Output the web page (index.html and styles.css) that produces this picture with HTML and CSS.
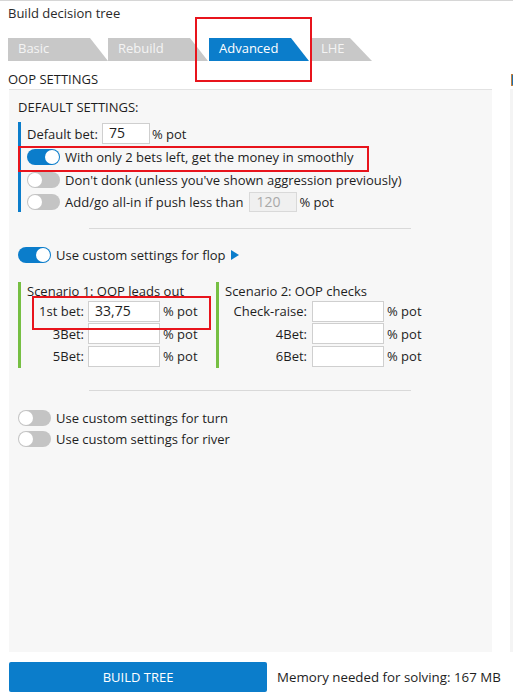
FILE: index.html
```html
<!DOCTYPE html>
<html>
<head>
<meta charset="utf-8">
<link rel="stylesheet" href="styles.css">
</head>
<body>
<div class="title">Build decision tree</div>
<div class="tabs">
  <div class="tab">Basic</div>
  <div class="tab">Rebuild</div>
  <div class="tab active">Advanced</div>
  <div class="tab short">LHE</div>
</div>
<div class="columns">
  <div class="col-main">
    <div class="section-head">OOP SETTINGS</div>
    <div class="panel">
      <div class="sub-head">DEFAULT SETTINGS:</div>
      <div class="defaults">
        <div class="row r1"><span class="lbl">Default bet:</span><span class="input w48">75</span><span class="unit">% pot</span></div>
        <div class="row r2"><span class="toggle on"></span><span class="lbl">With only 2 bets left, get the money in smoothly</span></div>
        <div class="row r3"><span class="toggle"></span><span class="lbl">Don't donk (unless you've shown aggression previously)</span></div>
        <div class="row r4"><span class="toggle"></span><span class="lbl">Add/go all-in if push less than</span><span class="input w48 disabled">120</span><span class="unit">% pot</span></div>
      </div>
      <div class="sep sep1"></div>
      <div class="row flop"><span class="toggle on"></span><span class="lbl">Use custom settings for flop</span><svg class="tri" width="8" height="10" viewBox="0 0 8 10"><polygon points="0,0 8,5 0,10" fill="#0b7dcb"/></svg></div>
      <div class="scenarios">
        <div class="scenario s1">
          <div class="sc-title">Scenario 1: OOP leads out</div>
          <div class="sc-row"><span class="sc-lbl">1st bet:</span><span class="input w72">33,75</span><span class="unit">% pot</span></div>
          <div class="sc-row"><span class="sc-lbl">3Bet:</span><span class="input w72"></span><span class="unit">% pot</span></div>
          <div class="sc-row"><span class="sc-lbl">5Bet:</span><span class="input w72"></span><span class="unit">% pot</span></div>
        </div>
        <div class="scenario s2">
          <div class="sc-title">Scenario 2: OOP checks</div>
          <div class="sc-row"><span class="sc-lbl">Check-raise:</span><span class="input w72"></span><span class="unit">% pot</span></div>
          <div class="sc-row"><span class="sc-lbl">4Bet:</span><span class="input w72"></span><span class="unit">% pot</span></div>
          <div class="sc-row"><span class="sc-lbl">6Bet:</span><span class="input w72"></span><span class="unit">% pot</span></div>
        </div>
      </div>
      <div class="sep sep2"></div>
      <div class="row turn"><span class="toggle"></span><span class="lbl">Use custom settings for turn</span></div>
      <div class="row river"><span class="toggle"></span><span class="lbl">Use custom settings for river</span></div>
    </div>
    <div class="footer">
      <div class="build-btn">BUILD TREE</div>
      <div class="memory">Memory needed for solving: 167 MB</div>
    </div>
  </div>
  <div class="col-side">
    <div class="side-head"><span class="side-icon"></span></div>
    <div class="side-panel"></div>
  </div>
</div>
<div class="mark mark-tab"></div>
<div class="mark mark-toggle"></div>
<div class="mark mark-bet"></div>
</body>
</html>
```
FILE: styles.css
```css
html, body {
  margin: 0;
  padding: 0;
}
body {
  width: 513px;
  height: 700px;
  overflow: hidden;
  background: #ffffff;
  border-top: 1px solid #d6d6d6;
  box-sizing: border-box;
  font-family: "Open Sans", "Noto Sans", sans-serif;
  font-size: 13px;
  color: #1e1e1e;
  position: relative;
}
.title {
  padding: 2px 0 0 8px;
  height: 20px;
  line-height: 20px;
  font-size: 13px;
  color: #2a2a2a;
}
.tabs {
  display: flex;
  margin: 15px 0 0 8px;
  height: 23px;
}
.tab {
  width: 100px;
  height: 23px;
  line-height: 21px;
  background: #c8c8c8;
  color: #f4f4f4;
  padding-left: 10px;
  box-sizing: border-box;
  clip-path: polygon(0 0, calc(100% - 18px) 0, 100% 100%, 0 100%);
}
.tab.active {
  background: #0b7dcb;
  color: #ffffff;
  margin-left: 1px;
}
.tab.short {
  width: 61px;
  margin-left: 2px;
  clip-path: polygon(0 0, calc(100% - 22px) 0, 100% 100%, 0 100%);
}
.columns {
  display: flex;
  gap: 18px;
  padding-left: 8px;
}
.col-main {
  width: 484px;
  flex: none;
}
.section-head {
  height: 20px;
  line-height: 20px;
  padding-top: 8px;
}
.panel {
  margin-left: 1px;
  width: 483px;
  height: 563px;
  box-sizing: border-box;
  background: #f7f7f7;
  border-top: 1px solid #e2e2e2;
  padding: 7px 0 0 9px;
}
.sub-head {
  height: 20px;
  line-height: 20px;
}
.defaults {
  margin-top: 5px;
  border-left: 3px solid #0b7dcb;
  padding-left: 6px;
}
.row {
  display: flex;
  align-items: center;
  line-height: 20px;
}
.r1 { height: 23px; }
.r2 { height: 24px; }
.r3 { height: 22px; }
.r4 { height: 21px; }
.lbl {
  white-space: nowrap;
}
.r1 .lbl {
  margin-right: 4px;
}
.input {
  display: inline-block;
  box-sizing: border-box;
  height: 21px;
  line-height: 18px;
  background: #ffffff;
  border: 1px solid #cfcfcf;
  padding-left: 6px;
  font-size: 14px;
  color: #1e1e1e;
}
.w48 { width: 48px; }
.w72 { width: 72px; }
.input.disabled {
  background: #f0f0f0;
  border-color: #d9d9d9;
  color: #a8a8a8;
  margin-left: 6px;
  height: 20px;
}
.unit {
  margin-left: 2px;
}
.sc-row .unit {
  margin-left: 3px;
}
.toggle {
  flex: none;
  width: 33px;
  height: 16px;
  border-radius: 8px;
  background: #c4c4c4;
  position: relative;
  margin-right: 5px;
}
.toggle::after {
  content: "";
  position: absolute;
  top: 1px;
  left: 1px;
  width: 14px;
  height: 14px;
  border-radius: 50%;
  background: #ffffff;
}
.toggle.on {
  background: #0b7dcb;
}
.toggle.on::after {
  left: 18px;
}
.sep {
  width: 322px;
  height: 1px;
  background: #d9d9d9;
  margin-left: 71px;
}
.sep1 { margin-top: 16px; }
.flop {
  margin-top: 15px;
  height: 22px;
}
.tri {
  margin-left: 5px;
}
.scenarios {
  display: flex;
  margin-top: 16px;
}
.scenario {
  border-left: 3px solid #76bf43;
  box-sizing: border-box;
  height: 86px;
}
.s1 {
  width: 198px;
  padding-left: 6px;
}
.s2 {
  padding-left: 6px;
}
.sc-title {
  height: 18px;
  line-height: 18px;
}
.sc-row {
  display: flex;
  align-items: center;
  height: 22.5px;
  line-height: 20px;
}
.sc-lbl {
  text-align: right;
  white-space: nowrap;
}
.s1 .sc-lbl {
  width: 57px;
  margin-right: 4px;
}
.s2 .sc-lbl {
  width: 82px;
  margin-right: 5px;
}
.sep2 { margin-top: 22px; }
.turn {
  margin-top: 16px;
  height: 21px;
}
.river {
  height: 22px;
}
.footer {
  display: flex;
  align-items: center;
  margin-top: 10px;
  margin-left: 1px;
}
.build-btn {
  flex: none;
  width: 258px;
  height: 30px;
  line-height: 30px;
  background: #0b7dcb;
  color: #ffffff;
  text-align: center;
  border-radius: 2px;
  font-size: 13px;
}
.memory {
  margin-left: 10px;
  font-size: 13.3px;
  white-space: nowrap;
}
.col-side {
  width: 3px;
  flex: none;
  overflow: hidden;
}
.side-head {
  height: 28px;
  position: relative;
}
.side-icon {
  display: block;
  position: absolute;
  left: 1px;
  top: 13px;
  width: 10px;
  height: 10px;
  background: #1f6fae;
  border: 1px solid #c08040;
}
.side-panel {
  height: 563px;
  background: #f4f4f4;
}
.mark {
  position: absolute;
  border: 2px solid #e8141c;
  box-sizing: border-box;
  pointer-events: none;
}
.mark-tab {
  left: 195px;
  top: 16px;
  width: 117px;
  height: 65px;
}
.mark-toggle {
  left: 18px;
  top: 145px;
  width: 351px;
  height: 26px;
}
.mark-bet {
  left: 32px;
  top: 295px;
  width: 179px;
  height: 34px;
}
```
